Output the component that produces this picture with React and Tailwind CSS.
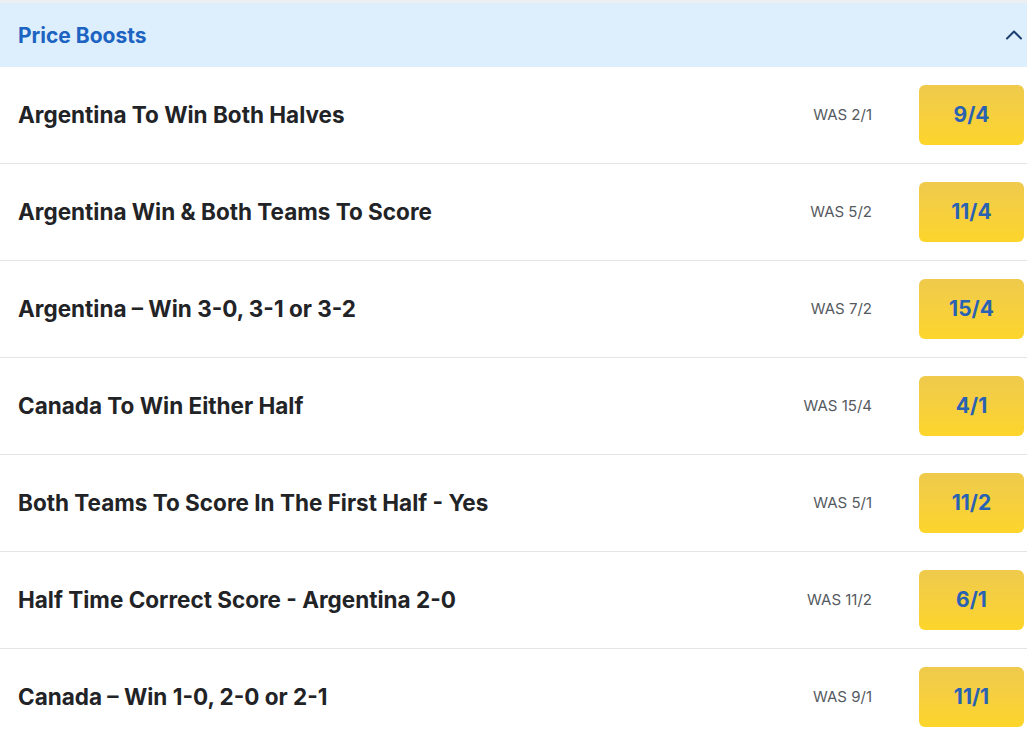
const rows = [
  { name: "Argentina To Win Both Halves", was: "2/1", price: "9/4" },
  { name: "Argentina Win & Both Teams To Score", was: "5/2", price: "11/4" },
  { name: "Argentina – Win 3-0, 3-1 or 3-2", was: "7/2", price: "15/4" },
  { name: "Canada To Win Either Half", was: "15/4", price: "4/1" },
  { name: "Both Teams To Score In The First Half - Yes", was: "5/1", price: "11/2" },
  { name: "Half Time Correct Score - Argentina 2-0", was: "11/2", price: "6/1" },
  { name: "Canada – Win 1-0, 2-0 or 2-1", was: "9/1", price: "11/1" },
];

export default function App() {
  return (
    <div className="min-h-screen w-[1027px] bg-white font-['Inter',sans-serif]">
      <div className="border-t-[3px] border-[#eceff1]">
        <div className="flex h-[64px] items-center justify-between bg-[#ddeffd] pl-[18px] pr-[3px]">
          <span className="pt-[1px] text-[21px] font-bold text-[#1c63c2]">Price Boosts</span>
          <svg width="20" height="20" viewBox="0 0 20 20" fill="none">
            <path d="M3 13.5 L10 6.5 L17 13.5" stroke="#1b3f6e" strokeWidth="2" strokeLinecap="round" strokeLinejoin="round" />
          </svg>
        </div>
        {rows.map((r) => (
          <div
            key={r.name}
            className="flex h-[97px] items-center border-b border-[#e3e5e8] pl-[18px] pr-[3px]"
          >
            <div className="flex-1 text-[22.5px] font-bold text-[#222326]">{r.name}</div>
            <div className="mr-[47px] text-[15px] text-[#555a60]">WAS {r.was}</div>
            <button className="flex h-[60px] w-[105px] items-center justify-center rounded-[6px] bg-gradient-to-b from-[#efca4c] to-[#fdd52a] text-[21px] font-bold text-[#2961b3]">
              {r.price}
            </button>
          </div>
        ))}
      </div>
    </div>
  );
}
